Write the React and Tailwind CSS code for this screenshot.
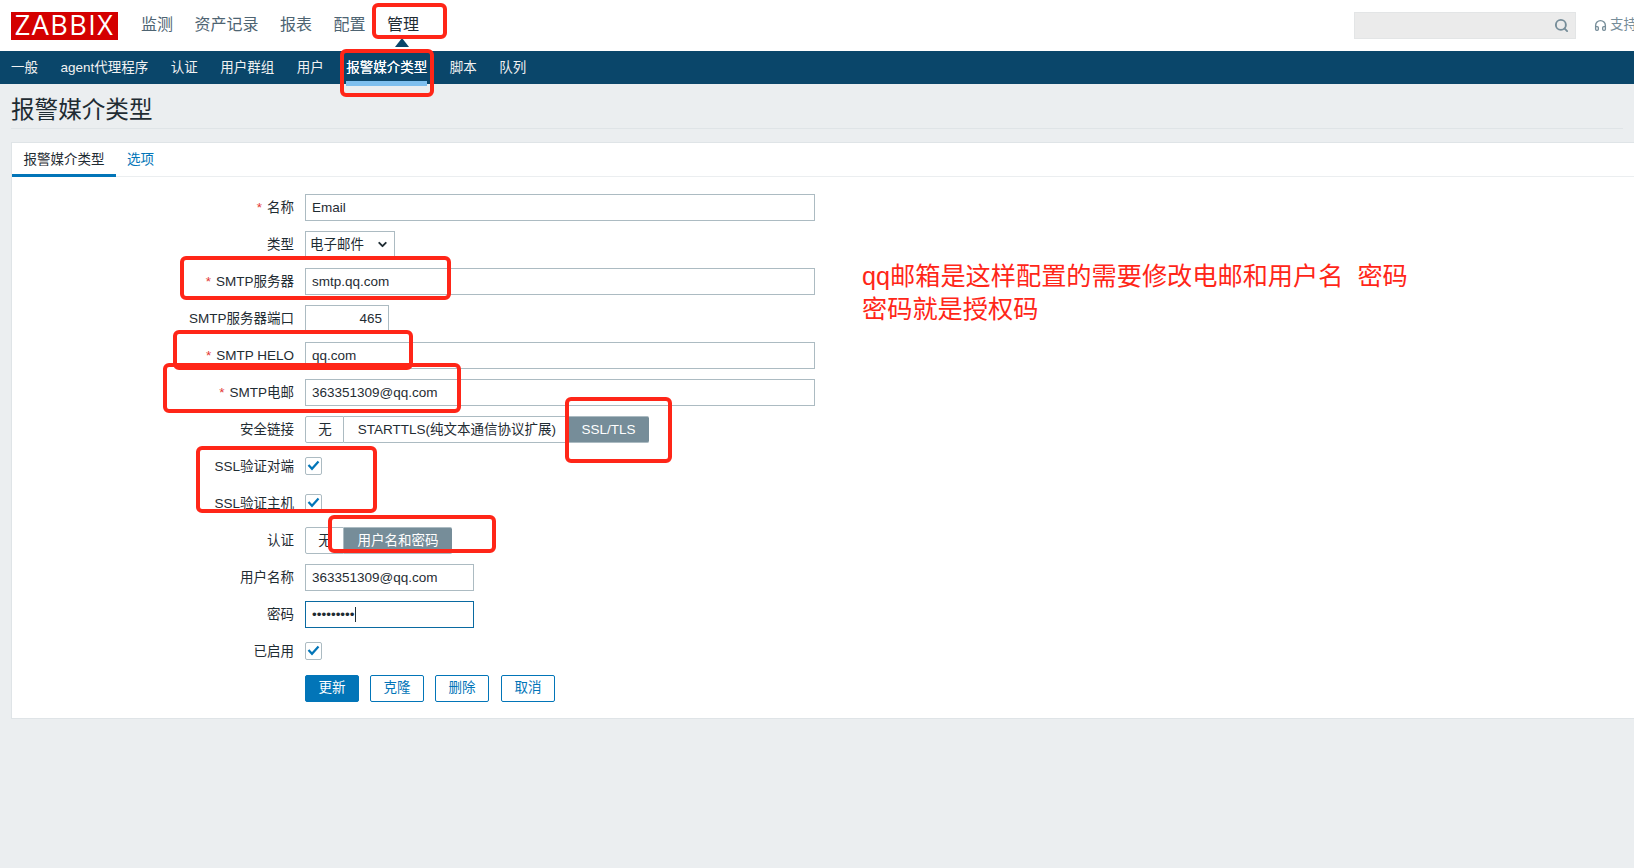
import { Search, Headphones, ChevronDown } from 'lucide-react'

const font = { fontFamily: '"Liberation Sans", "Noto Sans CJK SC", sans-serif' }

const topNav = ['监测', '资产记录', '报表', '配置', '管理']
const subNav = ['一般', 'agent代理程序', '认证', '用户群组', '用户', '报警媒介类型', '脚本', '队列']

const Row = ({ label, required, children }) => (
  <div className="flex h-[27px] items-center">
    <div className="w-[283px] pr-[1px] pt-[1px] text-right text-[#1f2c33]">
      {required && <span className="mr-[5px] text-[#e33734]">*</span>}
      {label}
    </div>
    <div className="ml-[10px] flex h-full items-center">{children}</div>
  </div>
)

const TextInput = ({ value, w = 'w-[510px]', type = 'text', right }) => (
  <input
    type={type}
    defaultValue={value}
    className={`h-[27px] ${w} border border-[#acbbc2] bg-white px-[6px] text-[#1f2c33] outline-none ${right ? 'text-right' : ''}`}
  />
)

const Checkbox = () => (
  <div className="-mt-[2px] flex h-[18px] w-[17px] items-center justify-center rounded-[2px] border border-[#acbbc2] bg-white">
    <svg width="13" height="11" viewBox="0 0 13 11" fill="none">
      <path d="M1.5 5 L5 8.8 L11.5 1.5" stroke="#0275b8" strokeWidth="2.2" />
    </svg>
  </div>
)

const Segments = ({ items, active }) => (
  <div className="flex h-[27px]">
    {items.map(([name, w], i) => (
      <div
        key={name}
        className={`flex h-full items-center justify-center border-y border-[#acbbc2] pt-[1px] ${w} ${
          name === active
            ? 'rounded-r-[2px] border-[#768d99] bg-[#768d99] text-white'
            : `border-r text-[#1f2c33] ${i === 0 ? 'rounded-l-[2px] border-l' : ''}`
        }`}
      >
        {name}
      </div>
    ))}
  </div>
)

const Btn = ({ children, primary, w = 'w-[54px]' }) => (
  <button
    className={`h-[27px] ${w} rounded-[2px] border border-[#0275b8] ${
      primary ? 'bg-[#0275b8] text-white' : 'bg-white text-[#0275b8]'
    }`}
  >
    {children}
  </button>
)

// red annotation frames drawn over the screenshot
const Mark = ({ className }) => (
  <div className={`pointer-events-none absolute rounded-[6px] border-[4px] border-[#ff2618] ${className}`} />
)

export default function App() {
  return (
    <div style={font} className="relative h-[868px] w-[1634px] overflow-hidden bg-[#ebeef0] text-[13.5px]">
      <header className="flex h-[51px] items-center bg-white pl-[11px]">
        <div
          style={{ fontFamily: '"Open Sans", sans-serif' }}
          className="flex h-[28px] w-[107px] items-center justify-center bg-[#d40000] text-[27px] font-normal tracking-[1.5px] text-white"
        >
          ZABBIX
        </div>
        <nav className="ml-[23px] flex gap-[21.5px] pb-[2px] text-[16px]">
          {topNav.map(n => (
            <div key={n} className={`relative ${n === '管理' ? 'text-[#1f2c33]' : 'text-[#4e6472]'}`}>
              {n}
              {n === '管理' && (
                <div className="absolute left-[8px] top-[25px] h-0 w-0 border-x-[7px] border-b-[9px] border-x-transparent border-b-[#0a466a]" />
              )}
            </div>
          ))}
        </nav>
        <div className="ml-auto flex items-center">
          <div className="flex h-[27px] w-[222px] items-center justify-end border border-[#e3e5e6] bg-[#ebebeb] pr-[6px]">
            <Search size={15} strokeWidth={3} className="text-[#768d99]" />
          </div>
          <div className="ml-[18px] flex w-[40px] shrink-0 items-center gap-[3px] whitespace-nowrap text-[#768d99]">
            <Headphones size={13} strokeWidth={2.5} className="shrink-0" />
            <span>支持</span>
          </div>
        </div>
      </header>

      <nav className="flex h-[33px] items-center gap-[22.5px] bg-[#0a466a] pl-[11px] pt-[1px] text-[#f2f2f2]">
        {subNav.map(n => (
          <div key={n} className={`relative ${n === '报警媒介类型' ? 'text-white [text-shadow:0_0_0.4px_white]' : ''}`}>
            {n}
            {n === '报警媒介类型' && <div className="absolute inset-x-0 top-[23px] h-[5px] bg-[#7ebfee]" />}
          </div>
        ))}
      </nav>

      <div className="mx-[11px] flex h-[45px] items-center border-b border-[#dfe4e7] pt-[10px] text-[23.6px] text-[#1f2c33]">
        报警媒介类型
      </div>

      <div className="ml-[11px] mt-[13px] border-y border-l border-[#dfe4e7] bg-white pb-[16px]">
        <div className="flex h-[34px] items-center border-b border-[#ebeef0] pt-[2px]">
          <div className="relative flex h-full w-[104px] items-center justify-center text-[#1f2c33]">
            报警媒介类型
            <div className="absolute inset-x-0 bottom-[-1px] h-[3px] bg-[#0275b8]" />
          </div>
          <div className="ml-[11px] text-[#0275b8]">选项</div>
        </div>

        <form className="mt-[17px] flex flex-col gap-[10px]">
          <Row label="名称" required><TextInput value="Email" /></Row>
          <Row label="类型">
            <div className="relative">
              <select className="h-[27px] w-[90px] appearance-none border border-[#acbbc2] bg-white pl-[4px] pt-[1px] text-[#1f2c33] outline-none">
                <option>电子邮件</option>
              </select>
              <ChevronDown size={13} strokeWidth={3.5} className="pointer-events-none absolute right-[6px] top-[7px] text-[#1f2c33]" />
            </div>
          </Row>
          <Row label="SMTP服务器" required><TextInput value="smtp.qq.com" /></Row>
          <Row label="SMTP服务器端口"><TextInput value="465" w="w-[84px]" right /></Row>
          <Row label="SMTP HELO" required><TextInput value="qq.com" /></Row>
          <Row label="SMTP电邮" required><TextInput value="363351309@qq.com" /></Row>
          <Row label="安全链接">
            <Segments
              items={[['无', 'w-[39px] pl-[1px]'], ['STARTTLS(纯文本通信协议扩展)', 'w-[224px] pl-[3px]'], ['SSL/TLS', 'w-[81px]']]}
              active="SSL/TLS"
            />
          </Row>
          <Row label="SSL验证对端"><Checkbox /></Row>
          <Row label="SSL验证主机"><Checkbox /></Row>
          <Row label="认证">
            <Segments items={[['无', 'w-[39px] pl-[1px]'], ['用户名和密码', 'w-[108px]']]} active="用户名和密码" />
          </Row>
          <Row label="用户名称"><TextInput value="363351309@qq.com" w="w-[169px]" /></Row>
          <Row label="密码">
            <div className="relative">
              <input
                type="password"
                defaultValue="123456789"
                className="h-[27px] w-[169px] border border-[#0a6aa1] bg-white px-[6px] text-[#1f2c33] outline-none"
              />
              <div className="absolute left-[50px] top-[6px] h-[15px] w-px bg-[#1f2c33]" />
            </div>
          </Row>
          <Row label="已启用"><Checkbox /></Row>
          <Row>
            <div className="flex">
              <Btn primary>更新</Btn>
              <div className="ml-[11px]"><Btn>克隆</Btn></div>
              <div className="ml-[11px]"><Btn>删除</Btn></div>
              <div className="ml-[12px]"><Btn>取消</Btn></div>
            </div>
          </Row>
        </form>
      </div>

      <p className="absolute left-[862px] top-[260px] whitespace-pre text-[25.2px] leading-[33px] text-[#ff2618]">
        {'qq邮箱是这样配置的需要修改电邮和用户名  密码\n密码就是授权码'}
      </p>

      <Mark className="left-[372px] top-[3px] h-[36px] w-[75px]" />
      <Mark className="left-[340px] top-[49px] h-[48px] w-[94px]" />
      <Mark className="left-[180px] top-[256px] h-[44px] w-[271px]" />
      <Mark className="left-[173px] top-[330px] h-[40px] w-[240px]" />
      <Mark className="left-[163px] top-[363px] h-[50px] w-[298px]" />
      <Mark className="left-[565px] top-[397px] h-[66px] w-[107px]" />
      <Mark className="left-[196px] top-[446px] h-[67px] w-[181px]" />
      <Mark className="left-[328px] top-[515px] h-[38px] w-[168px]" />
    </div>
  )
}
